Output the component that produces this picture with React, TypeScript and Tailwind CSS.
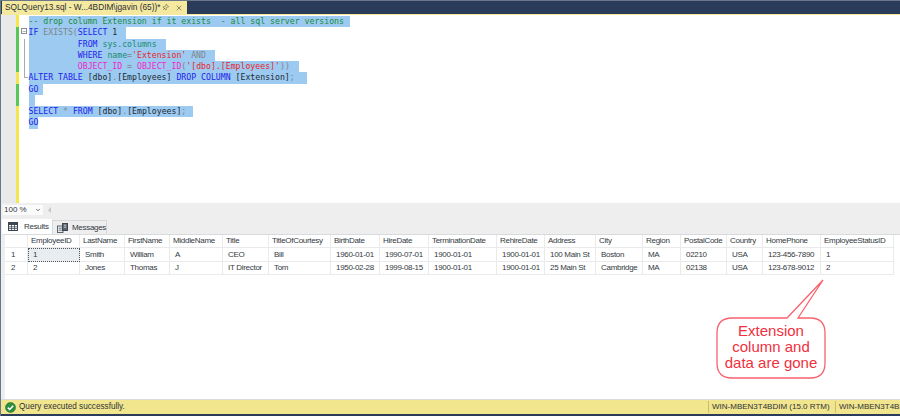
import { Pin, X, ChevronDown } from "lucide-react";

const blue = "text-[#2222ee]";
const gray = "text-[#7f858c]";
const pink = "text-[#ee28c8]";
const red = "text-[#e8262c]";
const green = "text-[#178a42]";
const teal = "text-[#178a70]";
const ink = "text-[#222b36]";

type Part = [string, string];

const lines: { indent?: number; parts: Part[]; bar: string; tail: string }[] = [
  { bar: "bg-[#f5e64e]", tail: "pr-[6px]", parts: [["-- drop column Extension if it exists  - all sql server versions", green]] },
  { bar: "bg-[#57c757]", tail: "pr-[9px]", parts: [["IF ", blue], ["EXISTS(", gray], ["SELECT ", blue], ["1", ink]] },
  { bar: "bg-[#57c757]", tail: "pr-[9px]", indent: 10, parts: [["FROM ", blue], ["sys.columns", teal]] },
  { bar: "bg-[#57c757]", tail: "pr-[9px]", indent: 10, parts: [["WHERE ", blue], ["name", teal], ["=", gray], ["'Extension'", red], [" AND", gray]] },
  { bar: "bg-[#57c757]", tail: "pr-[9px]", indent: 10, parts: [["OBJECT_ID", pink], [" = ", gray], ["OBJECT_ID", pink], ["(", gray], ["'[dbo].[Employees]'", red], ["))", gray]] },
  { bar: "bg-[#f5e64e]", tail: "pr-[12px]", parts: [["ALTER TABLE ", blue], ["[dbo]", ink], [".", gray], ["[Employees] ", ink], ["DROP COLUMN ", blue], ["[Extension]", ink], [";", gray]] },
  { bar: "bg-[#57c757]", tail: "pr-[5px]", parts: [["GO", blue]] },
  { bar: "bg-[#57c757]", tail: "pr-[2px]", parts: [[" ", ink]] },
  { bar: "bg-[#f5e64e]", tail: "pr-[7px]", parts: [["SELECT ", blue], ["* ", gray], ["FROM ", blue], ["[dbo]", ink], [".", gray], ["[Employees]", ink], [";", gray]] },
  { bar: "bg-[#f5e64e]", tail: "", parts: [["GO", blue]] },
];

const columns = [
  "EmployeeID", "LastName", "FirstName", "MiddleName", "Title", "TitleOfCourtesy", "BirthDate", "HireDate",
  "TerminationDate", "RehireDate", "Address", "City", "Region", "PostalCode", "Country", "HomePhone", "EmployeeStatusID",
];

const rows = [
  ["1", "Smith", "William", "A", "CEO", "Bill", "1960-01-01", "1990-07-01", "1900-01-01", "1900-01-01", "100 Main St", "Boston", "MA", "02210", "USA", "123-456-7890", "1"],
  ["2", "Jones", "Thomas", "J", "IT Director", "Tom", "1950-02-28", "1999-08-15", "1900-01-01", "1900-01-01", "25 Main St", "Cambridge", "MA", "02138", "USA", "123-678-9012", "2"],
];

function GridIcon() {
  return (
    <svg width="10" height="9" viewBox="0 0 10 9" className="shrink-0">
      <rect x="0.5" y="0.5" width="9" height="8" fill="#fff" stroke="#3c4652" />
      <rect x="0.5" y="0.5" width="9" height="2.5" fill="#3c4652" />
      <path d="M3.5 1v7M6.5 1v7M1 4.8h8M1 6.6h8" stroke="#3c4652" strokeWidth="0.8" />
    </svg>
  );
}

function MessagesIcon() {
  return (
    <svg width="11" height="10" viewBox="0 0 11 10" className="shrink-0">
      <rect x="0.5" y="3" width="5.5" height="6.5" fill="#e8eaec" stroke="#59636e" />
      <rect x="5.5" y="0.5" width="5" height="7" fill="#59636e" stroke="#3c4652" />
      <path d="M1.8 5.2h3M1.8 7.2h3" stroke="#59636e" strokeWidth="0.8" />
      <path d="M6.8 2.2h2.5M6.8 4.2h2.5" stroke="#e8eaec" strokeWidth="0.8" />
    </svg>
  );
}

function CheckIcon() {
  return (
    <svg width="11" height="11" viewBox="0 0 11 11" className="shrink-0">
      <circle cx="5.5" cy="5.5" r="5" fill="#2f8f3f" stroke="#1f6f30" strokeWidth="0.6" />
      <path d="M2.8 5.6l1.9 1.9 3.5-3.8" fill="none" stroke="#fff" strokeWidth="1.5" />
    </svg>
  );
}

export default function App() {
  return (
    <div className="relative flex h-[416px] w-[900px] flex-col overflow-hidden border-t border-l border-[#6b7688] bg-[#2b3c5a] font-['Liberation_Sans',sans-serif] text-[8px] tracking-[-0.3px] text-[#333a42]">
      {/* Tab strip */}
      <div className="flex h-[13px] shrink-0 pl-px">
        <div className="flex w-[185px] items-center justify-between bg-[#f5e9a0] pr-[4px] pl-[3px] text-[8.3px] tracking-normal text-[#2a2f36]">
          <span className="whitespace-nowrap">SQLQuery13.sql - W...4BDIM\jgavin (65))*</span>
          <span className="flex items-center gap-[6px]">
            <Pin size={7} strokeWidth={1.5} className="rotate-45" />
            <X size={8} strokeWidth={1.5} />
          </span>
        </div>
      </div>

      {/* Editor */}
      <div className="flex h-[189px] shrink-0 border-t border-[#f5e9a0] bg-white">
        <div className="h-full w-[15px] shrink-0 bg-[#e9e9ea]" />
        <div className="flex h-full w-[12.5px] shrink-0 flex-col">
          <div className="h-[1px] w-[3px] bg-[#f5e64e]" />
          <div className="flex flex-col">
            {lines.map((l, i) => (
              <div key={i} className="flex h-[11.25px]">
                <div className={`h-full w-[3px] ${l.bar}`} />
                {i === 1 && (
                  <div className="mt-[1px] ml-[2px] flex h-[6px] w-[6px] items-center justify-center border border-[#8a8f96] text-[6px] leading-none">
                    −
                  </div>
                )}
                {i > 1 && i < 5 && <div className="ml-[5px] h-full w-px bg-[#a8acb2]" />}
                {i === 5 && <div className="ml-[5px] h-[6px] w-[4px] border-b border-l border-[#a8acb2]" />}
              </div>
            ))}
          </div>
          <div className="w-[3px] flex-1 bg-[#f5e64e]" />
        </div>
        <div className="flex flex-col pt-[1px] font-['DejaVu_Sans_Mono',monospace] text-[8.2px] leading-[11.25px] tracking-normal">
          {lines.map((l, i) => (
            <div key={i} className="flex h-[11.25px]">
              <div className={`flex bg-[#9ccaf0] whitespace-pre ${l.tail}`}>
                {l.indent && <span>{" ".repeat(l.indent)}</span>}
                {l.parts.map(([t, c], j) => (
                  <span key={j} className={c}>
                    {t}
                  </span>
                ))}
              </div>
            </div>
          ))}
        </div>
      </div>

      {/* Zoom bar */}
      <div className="flex h-[13px] shrink-0 items-center gap-[5px] bg-[#eeeeef] pl-[2px]">
        <div className="flex h-[10px] w-[40px] items-center justify-between bg-[#fbfbfb] pr-[2px] pl-px tracking-normal">
          100 %
          <ChevronDown size={6} strokeWidth={3} />
        </div>
        <div className="h-0 w-0 border-y-[3px] border-r-[3px] border-y-transparent border-r-[#c4c6c9]" />
      </div>

      {/* Results tabs */}
      <div className="flex h-[18px] shrink-0 items-end bg-[#eeeeef] pl-[1px]">
        <div className="flex h-[15px] w-[50px] items-center gap-[6px] bg-white pl-[6px]">
          <GridIcon />
          Results
        </div>
        <div className="flex h-[14px] w-[55px] items-center gap-[4px] border border-b-0 border-[#d5d7da] pl-[4px]">
          <MessagesIcon />
          Messages
        </div>
      </div>

      {/* Results grid */}
      <div className="flex-1 border-t border-l-[4px] border-[#eeeeef] border-t-[#d8dadc] bg-white">
        <div className="grid auto-rows-[13.4px] grid-cols-[23px_52px_45px_45px_53px_46px_62px_49px_49px_68px_48px_51px_47px_38px_46px_36px_58px_73px]">
          <div className="border-r border-b border-[#e9eaec] bg-white" />
          {columns.map((name) => (
            <div key={name} className="flex items-center border-r border-b border-[#e9eaec] pl-[3px] whitespace-nowrap">
              {name}
            </div>
          ))}
          {rows.map((row, r) => (
            <div key={r} className="contents">
              <div className="flex items-center border-r border-b border-[#e9eaec] pl-[6px]">{r + 1}</div>
              {row.map((v, c) => (
                <div
                  key={c}
                  className={
                    r === 0 && c === 0
                      ? "flex items-center border border-dotted border-[#555] bg-[#e8edf2] pl-[4px]"
                      : "flex items-center border-r border-b border-[#e9eaec] pl-[5px] whitespace-nowrap"
                  }
                >
                  {v}
                </div>
              ))}
            </div>
          ))}
        </div>
      </div>

      {/* Status bar */}
      <div className="mb-[2px] flex h-[15px] shrink-0 items-center border-t border-[#d8dadc] bg-[#f1e58e] pl-[4px] text-[8.2px] tracking-normal text-[#2f3338]">
        <CheckIcon />
        <span className="ml-[3px]">Query executed successfully.</span>
        <div className="ml-auto flex h-full items-center text-[8px] whitespace-nowrap">
          <span className="w-[127px] border-l border-[#c9be70] pl-[3px]">WIN-MBEN3T4BDIM (15.0 RTM)</span>
          <span className="w-[65px] overflow-hidden border-l border-[#c9be70] pl-[3px]">WIN-MBEN3T4BDIM</span>
        </div>
      </div>

      {/* Callout */}
      <svg width="120" height="104" viewBox="0 0 120 104" className="absolute top-[278px] left-[711px]">
        <path
          d="M20 39 H75 L111 1 L86 39 H98 Q113 39 113 54 V84 Q113 99 98 99 H20 Q5 99 5 84 V54 Q5 39 20 39 Z"
          fill="#fff"
          stroke="#f8626e"
          strokeWidth="1.3"
        />
      </svg>
      <div className="absolute top-[322px] left-[716px] w-[108px] text-center text-[15px] leading-[16px] tracking-normal text-[#f0303e]">
        Extension
        <br />
        column and
        <br />
        data are gone
      </div>
    </div>
  );
}
